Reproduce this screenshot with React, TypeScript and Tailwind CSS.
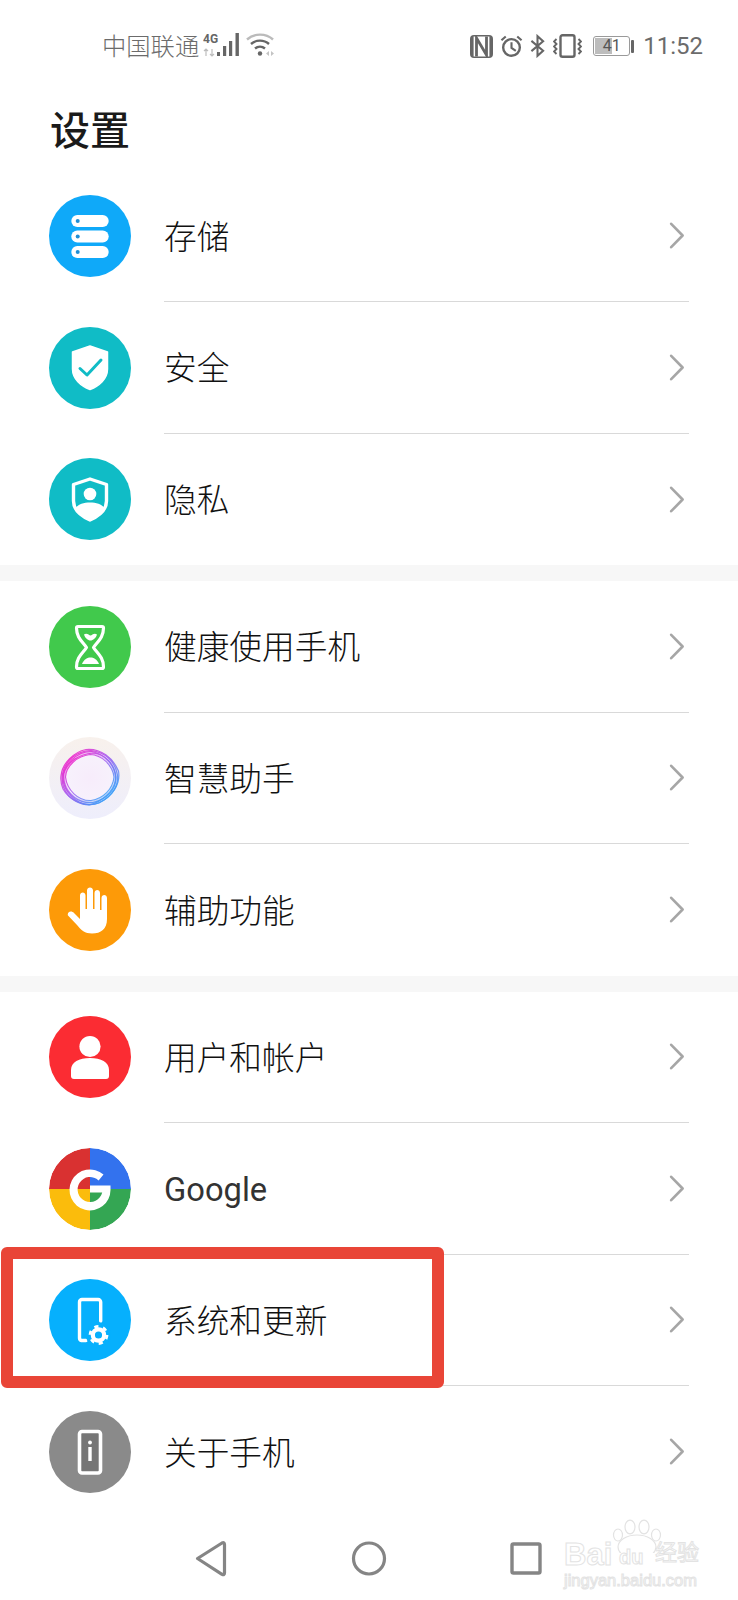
import React from "react";

const CJK = 'Roboto, "Noto Sans CJK SC", sans-serif';
const LAT = '"Liberation Sans", sans-serif';

function Storage() {
  return (
    <svg viewBox="0 0 82 82" className="w-full h-full">
      {[20, 35.5, 51].map((y) => (
        <g key={y}>
          <rect x="22.3" y={y} width="37.4" height="12" rx="6" fill="#fff" />
          <circle cx="28.7" cy={y + 6} r="2" fill="#1f8fd6" />
        </g>
      ))}
    </svg>
  );
}
function Shield() {
  return (
    <svg viewBox="0 0 82 82" className="w-full h-full">
      <path d="M41 19 L58.5 25 V42 C58.5 52 50 59 41 62.5 C32 59 23.5 52 23.5 42 V25 Z" fill="#fff" stroke="#fff" strokeWidth="1.5" strokeLinejoin="round" />
      <path d="M31 41.5 L38 48 L52 33" fill="none" stroke="#10bcc6" strokeWidth="3" strokeLinecap="round" strokeLinejoin="round" />
    </svg>
  );
}
function Privacy() {
  return (
    <svg viewBox="0 0 82 82" className="w-full h-full">
      <path d="M41 21 L57.5 26.5 V43 C57.5 52 50 58 41 62 C32 58 24.5 52 24.5 43 V26.5 Z" fill="none" stroke="#fff" strokeWidth="3.4" strokeLinejoin="round" />
      <circle cx="41" cy="36" r="6.3" fill="#fff" />
      <path d="M27 50 C29 46 35 44.5 41 44.5 C47 44.5 53 46 55 50 C53 55 47 59 41 62 C35 59 29 55 27 50 Z" fill="#fff" />
    </svg>
  );
}
function Hourglass() {
  return (
    <svg viewBox="0 0 82 82" className="w-full h-full">
      <path d="M29 20.5 H53 Q54.5 20.5 54.5 22 C54.5 32 48 36 44.5 41.5 C48 47 54.5 51 54.5 61 Q54.5 62.5 53 62.5 H29 Q27.5 62.5 27.5 61 C27.5 51 34 47 37.5 41.5 C34 36 27.5 32 27.5 22 Q27.5 20.5 29 20.5 Z" fill="none" stroke="#fff" strokeWidth="3.2" strokeLinejoin="round" />
      <path d="M35 28.5 C38 26.5 40 29.5 41.5 29.5 C43 29.5 45 26.5 48 28.5 C47 32 44 34.5 41.5 34.5 C39 34.5 36 32 35 28.5 Z" fill="#fff" />
      <path d="M33 58 C35 53 38.5 51.5 41.5 51.5 C44.5 51.5 48 53 50 58 Z" fill="#fff" />
    </svg>
  );
}
function Assistant() {
  return (
    <svg viewBox="0 0 82 82" className="w-full h-full">
      <defs>
        <linearGradient id="ring" x1="0.1" y1="0.15" x2="0.85" y2="0.9">
          <stop offset="0" stopColor="#f01fc8" />
          <stop offset="0.45" stopColor="#a65cf0" />
          <stop offset="1" stopColor="#35a4f8" />
        </linearGradient>
        <radialGradient id="inner">
          <stop offset="0" stopColor="#f7ecfb" />
          <stop offset="1" stopColor="#f7f2fc" />
        </radialGradient>
      </defs>
      <circle cx="41" cy="41" r="27" fill="url(#inner)" />
      <path d="M14 38 C17 24 29 15 43 15 C56 17 66 26 67.5 39 C68 52 58 62 45 65.5 C31 68 19 60 15 48 C14 44 13.5 41 14 38 Z" fill="none" stroke="url(#ring)" strokeWidth="4.5" strokeOpacity="0.3" />
      <g fill="none" stroke="url(#ring)" strokeWidth="1.2" strokeOpacity="0.85">
        <path d="M13.5 37 C16 24 27 14 42 13.5 C56 15 66 24 68.5 38 C70 51 60 63 46 67 C32 70 19 62 14.5 50 C13 45 13 41 13.5 37 Z" />
        <path d="M12 39 C13 26 25 15 37 12.5 C52 11 64 21 69.5 34 C72 48 62 60 50 66 C36 71 20 63 14 52 C12 47 11.5 43 12 39 Z" />
        <path d="M15 36 C19 24 31 17 44 16 C57 17 65 28 67 40 C67 53 58 62 44 65.5 C30 67 18 57 15.5 46 C14.5 42 14.5 39 15 36 Z" />
        <path d="M14 41 C14 28 28 14 43 14.5 C54 17 68 27 66.5 43 C65 54 53 65 40 68 C27 67 14 54 14 41 Z" />
        <path d="M16.5 40 C17 29 28 19 41 17.5 C53 18 63.5 28 65 40 C64 52 54 62 42 63.5 C29 64 18 53 16.5 40 Z" />
      </g>
    </svg>
  );
}
function Hand() {
  return (
    <svg viewBox="0 0 82 82" className="w-full h-full">
      <path
        d="M19.5 43.5 C21 42 23.5 42.5 25 44 L31 50 V26.5 C31 22.5 36.5 22.5 36.5 26.5 V40 H38 V21.5 C38 17.5 44 17.5 44 21.5 V40 H45.5 V24 C45.5 20 51 20 51 24 V41 H52.5 V29 C52.5 25 58 25 58 29 V50 C58 60 52 64.5 43 64.5 C36 64.5 32 61 28 56 L19 46.5 C18.5 46 18.8 44.5 19.5 43.5 Z"
        fill="#fff"
      />
    </svg>
  );
}
function User() {
  return (
    <svg viewBox="0 0 82 82" className="w-full h-full">
      <circle cx="41" cy="30.5" r="10.6" fill="#fff" />
      <path d="M22 60 V54 C22 46 30 42 41 42 C52 42 60 46 60 54 V60 A3 3 0 0 1 57 63 H25 A3 3 0 0 1 22 60 Z" fill="#fff" />
    </svg>
  );
}
function GoogleIcon() {
  return (
    <svg viewBox="0 0 82 82" className="w-full h-full">
      <path d="M41 41 V0 A41 41 0 0 0 0 41 Z" fill="#d93131" />
      <path d="M41 41 V0 A41 41 0 0 1 82 41 Z" fill="#3372ee" />
      <path d="M41 41 H82 A41 41 0 0 1 41 82 Z" fill="#34a653" />
      <path d="M41 41 H0 A41 41 0 0 0 41 82 Z" fill="#fbbc0c" />
      <path
        d="M54.5 26.5 A20.5 20.5 0 1 0 61.5 42 V37.5 H41 V44.5 H53.2 A12.5 12.5 0 1 1 49.6 32.4 Z"
        fill="#fff"
      />
    </svg>
  );
}
function SystemIcon() {
  return (
    <svg viewBox="0 0 82 82" className="w-full h-full">
      <path d="M37 61.5 H32.5 A2.5 2.5 0 0 1 30.5 59 V23 A2.5 2.5 0 0 1 33 20.5 H49 A2.5 2.5 0 0 1 51.7 23 V42" fill="none" stroke="#fff" strokeWidth="3.4" strokeLinecap="round" />
      <circle cx="49.5" cy="56" r="12.5" fill="#06b0fd" />
      <circle cx="49.5" cy="56" r="5.7" fill="none" stroke="#fff" strokeWidth="4.2" />
      <circle cx="49.5" cy="56" r="8.6" fill="none" stroke="#fff" strokeWidth="2.6" strokeDasharray="4.2 4.8" />
    </svg>
  );
}
function AboutIcon() {
  return (
    <svg viewBox="0 0 82 82" className="w-full h-full">
      <rect x="30.5" y="20.5" width="21" height="41.5" rx="2.5" fill="#767676" stroke="#fff" strokeWidth="3.6" />
      <circle cx="41" cy="31.5" r="1.9" fill="#fff" />
      <rect x="39.3" y="36" width="3.4" height="14" fill="#fff" />
    </svg>
  );
}

function Chevron() {
  return (
    <svg width="16" height="27" viewBox="0 0 16 27" className="shrink-0">
      <path d="M2.2 1.8 L13.6 13.5 L2.2 25.2" fill="none" stroke="#a6a6a6" strokeWidth="2.6" strokeLinecap="round" strokeLinejoin="round" />
    </svg>
  );
}

type RowProps = { label: string; bg: string; icon: React.ReactNode; last?: boolean; regular?: boolean };

function Row({ label, bg, icon, last, regular }: RowProps) {
  return (
    <div className="h-[131.5px] flex items-center">
      <div className={`w-[82px] h-[82px] rounded-full ml-[49px] shrink-0 overflow-hidden ${bg}`}>{icon}</div>
      <div className={`h-full ml-[33px] w-[525px] flex items-center justify-between ${last ? "" : "border-b border-[#d9d9d9]"}`}>
        <span
          className={`pt-[5px] text-[32.7px] leading-none ${regular ? "font-normal text-[#333333]" : "font-light text-[#111111]"}`}
          style={{ fontFamily: CJK }}
        >
          {label}
        </span>
        <div className="mr-[4px]"><Chevron /></div>
      </div>
    </div>
  );
}

function Gap() {
  return <div className="h-[16px] bg-[#f7f7f7]" />;
}

function StatusBar() {
  return (
    <div className="h-[90px] flex items-center justify-between pl-[102px] pr-[35px] pt-[2px] text-[#6b6b6b]">
      <div className="flex items-center">
        <span className="pt-[2px] text-[24.3px] leading-none font-light" style={{ fontFamily: CJK }}>中国联通</span>
        <svg width="74" height="28" viewBox="0 0 74 28" className="ml-[4px]">
          <text x="0" y="11" fontSize="12" fontWeight="700" fill="#666" fontFamily="Roboto, sans-serif">4G</text>
          <path d="M3 24 V17 M1 19 L3 17 L5 19 M9 17 V24 M7 22 L9 24 L11 22" fill="none" stroke="#bdbdbd" strokeWidth="1.2" />
          <rect x="14" y="20" width="3" height="4" fill="#666" />
          <rect x="20" y="14" width="3.2" height="10" fill="#666" />
          <rect x="26" y="9" width="3.2" height="15" fill="#666" />
          <rect x="32.5" y="1" width="3.4" height="23" fill="#666" />
          <path d="M44 7.5 C51 1 63 1 70 7.5" fill="none" stroke="#bbbbbb" strokeWidth="2.4" />
          <path d="M48 12 C53 7.5 61 7.5 66 12" fill="none" stroke="#666" strokeWidth="2.4" />
          <path d="M52 16.5 C55 14 59 14 62 16.5" fill="none" stroke="#666" strokeWidth="2.4" />
          <circle cx="57" cy="21.5" r="2.2" fill="#666" />
          <path d="M63 21.5 L66 19 V24 Z M68 19 V24 L71 21.5 Z" fill="#c4c4c4" />
        </svg>
      </div>
      <div className="flex items-center">
        <svg width="23" height="23" viewBox="0 0 23 23" className="mr-[7px]">
          <rect width="23" height="23" rx="4" fill="#666" />
          <rect x="3.6" y="1.5" width="15.8" height="20" fill="#fff" />
          <path d="M6.5 21.5 V3 L16.5 20 V1.5" fill="none" stroke="#666" strokeWidth="2.8" />
        </svg>
        <svg width="23" height="24" viewBox="0 0 24 24" className="mr-[7px]">
          <circle cx="12" cy="13.5" r="8.7" fill="none" stroke="#666" strokeWidth="2.5" />
          <path d="M12 8 V14 L16.5 17" fill="none" stroke="#666" strokeWidth="2.2" />
          <path d="M1.5 6 L6 2 M22.5 6 L18 2" stroke="#666" strokeWidth="2.2" />
        </svg>
        <svg width="15" height="24" viewBox="0 0 16 24" className="mr-[8px]">
          <path d="M1.5 6.5 L14 17 L8 22.5 V1.5 L14 7 L1.5 17.5" fill="none" stroke="#666" strokeWidth="2.2" />
        </svg>
        <svg width="29" height="24" viewBox="0 0 29 24" className="mr-[11px]">
          <rect x="7.5" y="1.2" width="14" height="21.6" rx="2" fill="none" stroke="#666" strokeWidth="2.4" />
          <path d="M3.5 5 L1 7.5 L3.5 10 L1 12.5 L3.5 15 L1 17.5 L3.5 20 M25.5 5 L28 7.5 L25.5 10 L28 12.5 L25.5 15 L28 17.5 L25.5 20" fill="none" stroke="#666" strokeWidth="1.9" />
        </svg>
        <div className="relative w-[37px] h-[20px] border border-[#9a9a9a] rounded-[3px] overflow-hidden">
          <div className="absolute left-[1px] top-[1px] bottom-[1px] w-[17px] bg-[#bdbdbd]" />
          <span className="absolute inset-0 flex items-center justify-center text-[16px] leading-none text-[#555]" style={{ fontFamily: "Roboto, sans-serif" }}>41</span>
        </div>
        <div className="w-[3px] h-[13px] bg-[#666] ml-[1px] mr-[9px] rounded-[1px]" />
        <span className="text-[24px] leading-none" style={{ fontFamily: "Roboto, sans-serif" }}>11:52</span>
      </div>
    </div>
  );
}

function Watermark() {
  const outline = "text-transparent [-webkit-text-stroke:1px_#e3e3e3]";
  return (
    <div className="absolute left-[564px] top-[1519px] w-[136px] h-[70px]">
      <svg width="56" height="34" viewBox="0 0 56 34" className="absolute left-[46px] top-0">
        <g fill="#fff" stroke="#e3e3e3" strokeWidth="1.2">
          <ellipse cx="8" cy="16" rx="4.5" ry="6" />
          <ellipse cx="20" cy="8" rx="5" ry="6.8" />
          <ellipse cx="34" cy="8" rx="5" ry="6.8" />
          <ellipse cx="46" cy="16" rx="4.5" ry="6" />
          <ellipse cx="27" cy="28" rx="19" ry="12" />
        </g>
      </svg>
      <span className={`absolute left-0 top-[20px] text-[31px] leading-none font-bold ${outline}`} style={{ fontFamily: LAT }}>Bai</span>
      <span className={`absolute left-[55px] top-[28px] text-[20px] leading-none font-bold ${outline}`} style={{ fontFamily: LAT }}>du</span>
      <span className={`absolute left-[91px] top-[23px] text-[22px] leading-none ${outline}`} style={{ fontFamily: CJK }}>经验</span>
      <span className={`absolute left-0 top-[53px] text-[16.5px] leading-none ${outline}`} style={{ fontFamily: LAT }}>jingyan.baidu.com</span>
    </div>
  );
}

export default function App() {
  return (
    <div className="w-[738px] h-[1600px] bg-white relative overflow-hidden">
      <StatusBar />
      <div className="h-[80.5px] flex items-start pl-[50px] pt-[22px]">
        <span className="text-[40px] leading-none font-medium text-[#1a1a1a]" style={{ fontFamily: CJK }}>设置</span>
      </div>
      <Row label="存储" bg="bg-[#0fa9f9]" icon={<Storage />} />
      <Row label="安全" bg="bg-[#10bcc6]" icon={<Shield />} />
      <Row label="隐私" bg="bg-[#10bcc6]" icon={<Privacy />} last />
      <Gap />
      <Row label="健康使用手机" bg="bg-[#41c94c]" icon={<Hourglass />} />
      <Row label="智慧助手" bg="bg-linear-to-b from-[#f8f1ec] to-[#eeeefc]" icon={<Assistant />} />
      <Row label="辅助功能" bg="bg-[#fd9a08]" icon={<Hand />} last />
      <Gap />
      <Row label="用户和帐户" bg="bg-[#fb2c33]" icon={<User />} />
      <Row label="Google" bg="bg-white" icon={<GoogleIcon />} regular />
      <Row label="系统和更新" bg="bg-[#06b0fd]" icon={<SystemIcon />} />
      <Row label="关于手机" bg="bg-[#8a8a8a]" icon={<AboutIcon />} last />

      <div className="absolute left-0 top-[1530px] w-[738px] h-[60px]">
        <svg width="738" height="60" viewBox="0 0 738 60">
          <path d="M197.5 28.5 L222 13 Q224.5 11.8 224.5 14.5 V43 Q224.5 45.5 222 44.3 Z" fill="none" stroke="#858585" strokeWidth="3.2" strokeLinejoin="round" />
          <circle cx="369" cy="28.5" r="15.5" fill="none" stroke="#858585" strokeWidth="3.2" />
          <rect x="512" y="14" width="28" height="29" rx="1.5" fill="none" stroke="#858585" strokeWidth="3.4" />
        </svg>
      </div>

      <Watermark />

      <div className="absolute left-[1px] top-[1247px] w-[443px] h-[141px] border-[12px] border-[#e94537] rounded-[6px]" />
    </div>
  );
}
